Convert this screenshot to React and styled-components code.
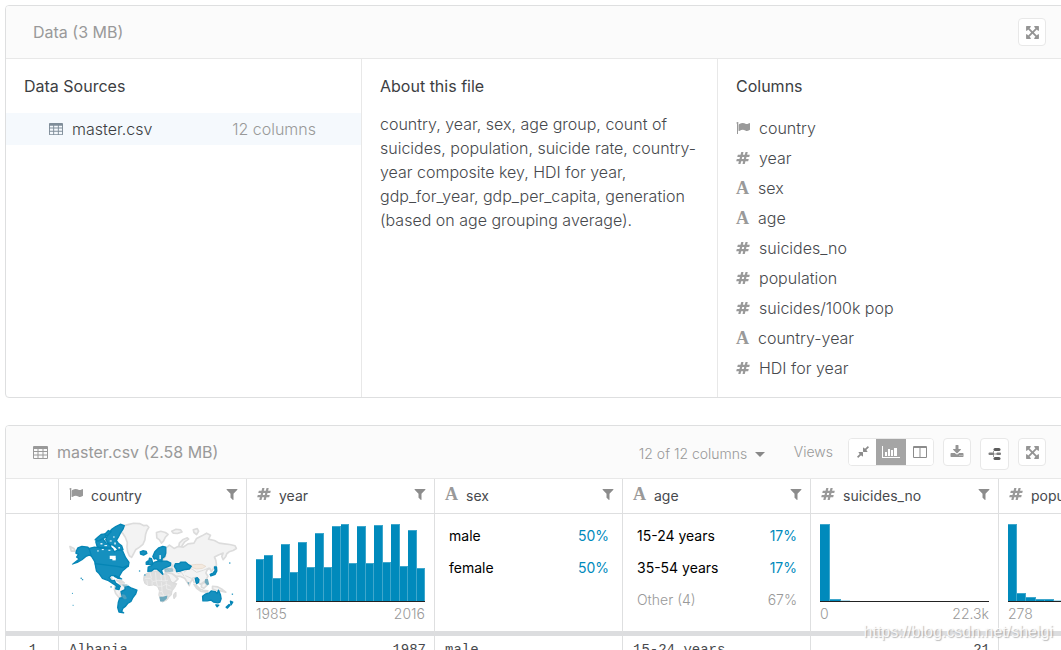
import React from "react";
import styled, { createGlobalStyle, css } from "styled-components";

const GlobalStyle = createGlobalStyle`
  *, *::before, *::after { box-sizing: border-box; }
  html, body { margin: 0; background: #fff; }
  body {
    font-family: Inter, "Liberation Sans", sans-serif;
    font-size: 16px;
    line-height: 24px;
    font-weight: 300;
    color: #47494d;
  }
  button, select { font: inherit; color: inherit; }
  h2, h3, p, ul { margin: 0; padding: 0; font-size: inherit; }
`;

/* ---------- icons ---------- */

const Glyph = styled.svg`
  display: block;
  flex: none;
  fill: currentColor;
  width: ${(p) => p.$size || 14}px;
  height: ${(p) => p.$size || 14}px;
`;

const PATHS = {
  filter:
    "M1595 295q17 41-14 70l-493 493v742q0 42-39 59-13 5-25 5-27 0-45-19l-256-256q-19-19-19-45v-486l-493-493q-31-29-14-70 17-39 59-39h1280q42 0 59 39z",
  expand:
    "M1411 541l-355 355 355 355 144-144q29-31 70-14 39 17 39 59v448q0 26-19 45t-45 19h-448q-42 0-59-40-17-39 14-69l144-144-355-355-355 355 144 144q31 30 14 69-17 40-59 40h-448q-26 0-45-19t-19-45v-448q0-42 40-59 39-17 69 14l144 144 355-355-355-355-144 144q-19 19-45 19-12 0-24-5-40-17-40-59v-448q0-26 19-45t45-19h448q42 0 59 40 17 39-14 69l-144 144 355 355 355-355-144-144q-31-30-14-69 17-40 59-40h448q26 0 45 19t19 45v448q0 42-39 59-13 5-25 5-26 0-45-19z",
  compress:
    "M896 960v448q0 26-19 45t-45 19-45-19l-144-144-332 332q-10 10-23 10t-23-10l-114-114q-10-10-10-23t10-23l332-332-144-144q-19-19-19-45t19-45 45-19h448q26 0 45 19t19 45zm755-672q0 13-10 23l-332 332 144 144q19 19 19 45t-19 45-45 19h-448q-26 0-45-19t-19-45v-448q0-26 19-45t45-19 45 19l144 144 332-332q10-10 23-10t23 10l114 114q10 10 10 23z",
  number:
    "M991 1024l64-256h-254l-64 256h254zm768-504l-56 224q-7 24-31 24h-327l-64 256h311q15 0 25 12 10 14 6 28l-56 224q-5 24-31 24h-327l-81 328q-7 24-31 24h-224q-16 0-26-12-9-12-6-28l78-312h-254l-81 328q-7 24-31 24h-225q-15 0-25-12-9-12-6-28l78-312h-311q-15 0-25-12-9-12-6-28l56-224q7-24 31-24h327l64-256h-311q-15 0-25-12-10-14-6-28l56-224q5-24 31-24h327l81-328q7-24 32-24h224q15 0 25 12 9 12 6 28l-78 312h254l81-328q7-24 32-24h224q15 0 25 12 9 12 6 28l-78 312h311q15 0 25 12 9 12 6 28z",
  download:
    "M1344 1344q0-26-19-45t-45-19-45 19-19 45 19 45 45 19 45-19 19-45zm256 0q0-26-19-45t-45-19-45 19-19 45 19 45 45 19 45-19 19-45zm128-224v320q0 40-28 68t-68 28h-1472q-40 0-68-28t-28-68v-320q0-40 28-68t68-28h465l135 136q58 56 136 56t136-56l136-136h464q40 0 68 28t28 68zm-325-569q17 41-14 70l-448 448q-18 19-45 19t-45-19l-448-448q-31-29-14-70 17-39 59-39h256v-448q0-26 19-45t45-19h256q26 0 45 19t19 45v448h256q42 0 59 39z",
  flag:
    "M320 256q0 72-64 110v1266q0 13-9.5 22.5t-22.5 9.5h-64q-13 0-22.5-9.5t-9.5-22.5v-1266q-64-38-64-110 0-53 37.5-90.5t90.5-37.5 90.5 37.5 37.5 90.5zm1472 64v763q0 25-12.5 38.5t-39.5 27.5q-215 116-369 116-61 0-123.5-22t-108.5-48-115.5-48-142.5-22q-192 0-464 146-17 9-33 9-26 0-45-19t-19-45v-742q0-32 31-55 21-14 79-43 236-120 421-120 107 0 200 29t219 88q38 19 88 19 54 0 117.5-21t110-47 88-47 54.5-21q26 0 45 19t19 45z",
};

const Icon = ({ name, size }) => (
  <Glyph viewBox="0 0 1792 1792" $size={size} aria-hidden="true">
    <path d={PATHS[name]} />
  </Glyph>
);

const TableIcon = ({ size = 14 }) => (
  <Glyph viewBox="0 0 15 15" $size={size} aria-hidden="true">
    <path
      fillRule="evenodd"
      d="M1 1h13q1 0 1 1v11q0 1-1 1H1q-1 0-1-1V2q0-1 1-1zM1 4v2h3.500V4zM5.500 4v2h4V4zM10.500 4v2H14V4zM1 7v2.500h3.500V7zM5.500 7v2.500h4V7zM10.500 7v2.500H14V7zM1 10.500V13h3.500v-2.500zM5.500 10.500V13h4v-2.500zM10.500 10.500V13H14v-2.500z"
    />
  </Glyph>
);

const ChartIcon = () => (
  <Glyph viewBox="0 0 18 14" $size={18} aria-hidden="true">
    <path d="M0 1h1v11h17v1H0zM3 7h2v4H3zM6 4h2v7H6zM9 5h2v6H9zM12 3h3v8h-3z" />
  </Glyph>
);

const ColumnsIcon = () => (
  <Glyph viewBox="0 0 14 14" aria-hidden="true">
    <path
      fillRule="evenodd"
      d="M1 1h12q1 0 1 1v10q0 1-1 1H1q-1 0-1-1V2q0-1 1-1zM1 3v9h5.500V3zM7.500 3v9H13V3z"
    />
  </Glyph>
);

const KernelIcon = () => (
  <Glyph viewBox="0 0 14 14" aria-hidden="true">
    <path
      d="M5.500 4V10M5.500 7H9"
      fill="none"
      stroke="currentColor"
      strokeWidth="1"
      opacity="0.6"
    />
    <rect x="0.500" y="5.500" width="5" height="2.500" rx="1" opacity="0.8" />
    <rect x="5.500" y="1" width="7" height="3" rx="1.500" />
    <rect x="8.500" y="5.500" width="4.500" height="2.500" rx="1" opacity="0.8" />
    <rect x="5.500" y="10" width="7" height="3" rx="1.500" />
  </Glyph>
);

const CaretIcon = styled.span`
  border: 5px solid transparent;
  border-top-color: #888;
  border-bottom: 0;
`;

const Letter = styled.span`
  width: 13px;
  flex: none;
  font: bold 18px/20px "Liberation Serif", serif;
`;

const TypeMark = styled.span`
  display: flex;
  flex: none;
  color: #999;
`;

const TypeIcon = ({ type }) => (
  <TypeMark>
    {type === "text" ? <Letter aria-hidden="true">A</Letter> : <Icon name={type} />}
  </TypeMark>
);

/* ---------- page and panels ---------- */

const Page = styled.main`
  position: relative;
  height: 100vh;
  overflow: hidden;
  padding: 5px 0 0 5px;
`;

/* The panels run past the right edge of the window. */
const Panels = styled.div`
  display: flex;
  flex-direction: column;
  gap: 27px;
  margin-right: -14px;
`;

const Panel = styled.section`
  border: 1px solid #dedfe0;
  border-radius: 4px;
  overflow: hidden;
`;

const PanelHeader = styled.header`
  display: flex;
  align-items: center;
  height: 53px;
  padding: 0 28px 0 27px;
  background: #fbfbfb;
  border-bottom: 1px solid #e8e8e8;
  color: #999;
`;

const PanelTitle = styled.h2`
  display: flex;
  align-items: center;
  gap: 9px;
  margin-right: auto;
  font-weight: 400;
`;

const buttonFrame = css`
  display: flex;
  align-items: center;
  justify-content: center;
  padding: 0;
  background: #fff;
  color: #949494;
  border: 1px solid #e8e8e8;
  border-radius: 4px;
`;

const IconButton = styled.button`
  ${buttonFrame}
  width: ${(p) => (p.$tall ? 29 : 28)}px;
  height: ${(p) => (p.$tall ? 32 : 28)}px;
  margin-left: 9px;
  ${(p) => p.$tall && "color: #5c5c5c; margin-top: 4px;"}
`;

/* ---------- overview panel ---------- */

const Overview = styled.div`
  display: grid;
  grid-template-columns: repeat(3, 1fr);
`;

const OverviewColumn = styled.div`
  padding: 15px 0 14px;
  border-right: 1px solid #e8e8e8;
  &:last-child { border-right: 0; }
`;

const Heading = styled.h3`
  padding: 0 18px;
  font-weight: 400;
  color: #3c3e42;
`;

const About = styled.p`
  padding: 14px 18px 0;
`;

const FileRow = styled.a`
  display: flex;
  align-items: center;
  gap: 9px;
  height: 32px;
  margin-top: 15px;
  padding: 0 45px 0 43px;
  background: #f5f9fd;
  color: #3c3e42;
  text-decoration: none;
  svg { color: #7f8d99; }
`;

const FileMeta = styled.span`
  margin-left: auto;
  color: #999;
`;

const FieldList = styled.ul`
  padding: 15px 18px 0;
  list-style: none;
`;

const Field = styled.li`
  display: flex;
  align-items: center;
  gap: 9px;
  height: 30px;
`;

/* ---------- file panel ---------- */

const ColumnPicker = styled.label`
  display: inline-grid;
  align-items: center;
  margin: 4px 29px 0 0;
  font-size: 14px;
  select {
    grid-area: 1 / 1;
    appearance: none;
    padding: 0 17px 0 0;
    border: 0;
    background: none;
  }
  ${CaretIcon} {
    grid-area: 1 / 1;
    justify-self: end;
    pointer-events: none;
  }
`;

const ViewsLabel = styled.span`
  margin-right: 15px;
  font-size: 14px;
`;

const ViewGroup = styled.div`
  display: flex;
  height: 28px;
  background: #fff;
  border: 1px solid #e8e8e8;
  border-radius: 4px;
  overflow: hidden;
`;

const ViewButton = styled.button`
  display: flex;
  align-items: center;
  justify-content: center;
  width: ${(p) => (p.$active ? 30 : 27)}px;
  padding: 0;
  border: 0;
  background: ${(p) => (p.$active ? "#a5a5a5" : "#fff")};
  color: ${(p) => (p.$active ? "#fff" : "#8c8c8c")};
`;

const DataTable = styled.table`
  width: 1181px;
  table-layout: fixed;
  border-collapse: separate;
  border-spacing: 0;
  th, td {
    padding: 0;
    border-right: 1px solid #dedfe0;
    vertical-align: top;
    text-align: left;
  }
`;

const Col = styled.col`
  width: ${(p) => (p.$index ? 53 : 188)}px;
`;

const HeadCell = styled.th`
  height: 35px;
  border-bottom: 1px solid #dedfe0;
  font-size: 14px;
  font-weight: 400;
`;

const HeadInner = styled.div`
  display: flex;
  align-items: center;
  gap: 8px;
  height: 34px;
  padding: 0 7px 0 10px;
`;

const HeadIcon = styled.span`
  padding-bottom: 4px;
`;

const FilterButton = styled.button`
  margin-left: auto;
  padding: 0 0 4px;
  border: 0;
  background: none;
  color: #8c8c8c;
`;

const StatCell = styled.td`
  height: 122px;
  border-bottom: 5px solid #dcdddf;
  font-size: 14px;
`;

const Chart = styled.div`
  padding: 10px 9px 0;
`;

const Bars = styled.div`
  display: flex;
  align-items: flex-end;
  height: 78px;
  border-bottom: 1px solid #222;
`;

const Bar = styled.span`
  flex: 1;
  background: #008abc;
  border: 0 solid #3fa7cc;
  border-width: ${(p) => (p.$faint ? 0 : "1px 1px 0 0")};
  opacity: ${(p) => (p.$faint ? 0.3 : 1)};
`;

const Range = styled.div`
  display: flex;
  justify-content: space-between;
  color: #999;
`;

const Values = styled.ul`
  padding: 6px 13px 0 14px;
  list-style: none;
`;

const Value = styled.li`
  display: flex;
  align-items: center;
  justify-content: space-between;
  height: 32px;
  font-weight: ${(p) => (p.$other ? 300 : 400)};
  color: ${(p) => (p.$other ? "#999" : "#000")};
  span:last-child { color: ${(p) => (p.$other ? "#999" : "#008abc")}; }
`;

const DataCell = styled.td`
  && {
    padding: 0 8px 0 10px;
    text-align: ${(p) => p.$align || "left"};
    font: 400 14px/28px "Liberation Mono", monospace;
    color: #47494d;
  }
`;

const Watermark = styled.span`
  position: absolute;
  right: 8px;
  bottom: 8px;
  font: 400 16px/20px "Liberation Sans", sans-serif;
  color: rgba(255, 255, 255, 0.85);
  text-shadow: 1px 1px 1px rgba(120, 120, 120, 0.5);
`;

/* ---------- world map ---------- */

const MapSvg = styled.svg`
  display: block;
  width: 187px;
  height: 110px;
  margin: 1px 0 0 1px;
  max-width: calc(100% - 1px);
`;

const EMPTY_LAND = [
  // Greenland
  "M183 40L192 32 205 28 222 24 240 25 252 31 262 30 268 36 262 46 258 58 256 74 250 88 240 96 228 104 222 116 216 127 209 122 204 110 202 96 203 82 197 66 189 54 181 50z",
  // Svalbard and the Arctic islands
  "M291 52L304 48 318 52 326 58 318 66 312 78 306 84 300 74 292 68z",
  "M337 48L350 42 364 44 368 50 354 55 342 54z",
  "M358 96L360 84 370 74 384 68 388 72 376 80 368 92 364 100z",
  "M402 44L414 40 418 48 412 58 404 52z",
  // Russia and Asia
  "M320 98L330 90 344 100 356 94 372 96 386 86 404 84 412 70 428 62 442 54 454 60 448 72 466 76 480 84 496 86 512 88 528 92 532 100 522 106 510 110 503 116 500 124 492 134 488 124 492 114 478 120 466 126 470 136 472 150 462 162 456 170 452 160 444 164 440 174 446 184 440 196 430 204 424 208 414 202 404 202 400 192 392 204 390 212 384 202 376 190 362 184 350 184 340 178 320 176 316 168 322 160 336 160 340 150 330 150 318 146 310 136 318 124z",
  "M318 172L338 176 348 184 356 192 346 202 332 208 326 196z",
  // Indonesia and Papua
  "M404 208L412 212 422 222 432 226 446 228 444 232 426 230 412 220z",
  "M428 206L440 202 442 212 434 220 426 216z",
  "M460 214L476 216 490 224 500 232 484 228 470 226 460 222z",
  // Central and South America
  "M146 184L156 190 160 200 152 198z",
  "M168 208L184 208 196 214 206 222 196 226 182 236 184 250 178 248 168 236 164 224z",
  "M186 254L196 258 194 268 186 262z",
  "M170 196L186 198 194 204 184 204z",
  "M30 94L42 100 46 108 34 108z",
];

const AFRICA = [
  "M254 180L268 172 284 168 298 168 304 176 316 176 328 182 334 198 342 206 352 206 346 218 338 228 336 240 328 248 322 256 308 262 302 252 298 240 300 228 294 214 282 210 268 212 256 206 252 194z",
  "M344 236L350 232 350 244 344 252 342 244z",
];

const BORDERS = [
  "M322 160L330 170 344 164 356 176 366 172 374 184M344 164L346 152M374 172L388 160 398 162 412 172 432 166 450 158M388 160L394 148M378 182L396 190 412 186 422 196",
];

const AFRICA_BORDERS =
  "M256 190L272 190 280 200 296 196 314 198 326 196M272 174L276 190M288 172L290 196M304 178L306 198M316 180L318 198M262 196L264 210M278 200L278 210M290 198L294 214 308 214 320 208 334 214M306 202L308 230 300 230M320 200L322 222 336 226M308 230L314 244 330 240M300 240L314 244 312 256";

const BLUE_LAND = [
  // Alaska
  "M50 106L54 98 66 94 84 96 88 102 104 100 108 120 98 124 88 120 78 124 66 134 52 142 40 146 58 132 50 126 56 118 48 114z",
  // Canada
  "M88 100L104 96 122 98 136 100 148 94 158 100 164 110 172 106 180 98 190 110 198 128 208 142 206 154 192 160 180 156 172 160 108 152 104 138 94 122z",
  // Arctic archipelago
  "M142 62L156 42 168 34 182 27 194 31 190 42 182 54 176 66 170 76 176 84 186 92 190 104 176 106 168 96 160 90 148 88 138 74z",
  "M108 80L118 72 130 72 138 82 152 90 154 100 136 98 122 98 112 94z",
  "M106 74L114 66 124 58 136 56 138 66 126 72 116 78z",
  "M136 56L146 46 154 50 142 62z",
  // United States and Mexico
  "M106 146L172 154 190 158 204 152 198 160 188 168 182 178 176 190 168 182 154 182 148 188 156 198 164 196 168 204 182 214 178 218 160 206 144 196 128 190 118 176 110 168 108 158z",
  // Caribbean
  "M164 184L176 186 186 192 176 190z",
  // Brazil and the south
  "M196 216L206 214 216 220 232 226 228 238 220 248 214 260 204 266 198 274 190 280 186 290 192 294 178 292 174 278 176 262 180 250 188 248 186 238 184 230 196 224z",
  "M170 214L180 218 178 224 168 222z",
  // Iceland and British Isles
  "M242 110L250 107 260 109 262 115 252 120 243 117z",
  "M267 140L270 129 276 131 280 145 274 149 266 148z",
  "M260 142L265 138 265 148 260 148z",
  // Scandinavia
  "M280 124L286 110 298 98 310 94 319 96 319 114 316 124 308 130 308 136 298 138 290 130 284 132z",
  // Europe
  "M266 156L276 152 284 142 296 138 306 140 312 138 322 138 334 144 333 152 322 156 314 160 306 166 310 178 302 170 292 162 284 162 276 168 265 169z",
  // Kazakhstan
  "M345 154L348 146 360 146 364 141 378 141 386 148 396 154 390 162 376 164 364 168 352 170 350 162z",
  // Thailand, Japan
  "M408 190L414 188 419 194 418 202 412 206 410 200z",
  "M453 178L462 174 468 166 466 156 472 156 473 168 468 178 455 183z",
  // Australia
  "M430 244L438 238 450 234 456 228 468 230 474 236 478 226 484 240 486 252 482 262 476 264 464 262 456 256 444 258 431 258z",
  "M470 270L479 271 474 276z",
  // New Zealand
  "M514 259L521 262 516 270z",
  "M510 269L513 271 505 280 501 277z",
];

const DOTS = [
  [62, 188, 4], [66, 192, 4], [36, 146, 3], [238, 166, 4], [152, 214, 4], [254, 178, 4],
  [510, 142, 4], [38, 270, 3], [518, 236, 4], [36, 234, 3],
];

const LAKES = [
  [150, 122, 18, 10], [158, 130, 10, 6], [122, 84, 6, 4], [134, 90, 8, 3], [150, 76, 6, 3],
  [164, 82, 4, 6], [112, 106, 5, 3], [126, 102, 6, 3], [146, 104, 6, 3], [160, 64, 5, 3],
  [176, 96, 5, 4], [300, 120, 4, 12],
];

const WorldMap = () => (
  <MapSvg viewBox="0 0 561 330" role="img" aria-label="Countries in the data">
    <g fill="#f3f3f3" stroke="#dcdcdc" strokeWidth="5" strokeLinejoin="round">
      {EMPTY_LAND.map((d) => <path key={d} d={d} />)}
    </g>
    <g fill="#dedede" stroke="#d9d9d9" strokeWidth="3">
      {AFRICA.map((d) => <path key={d} d={d} />)}
    </g>
    <path d={AFRICA_BORDERS} fill="none" stroke="#f1f1f1" strokeWidth="2" />
    <g fill="none" stroke="#dcdcdc" strokeWidth="3">
      {BORDERS.map((d) => <path key={d} d={d} />)}
    </g>
    <path d="M396 150L412 148 428 148 440 154 430 160 412 162 400 158z" fill="#f3e9df" stroke="#e4d5c6" strokeWidth="2" />
    <g fill="#1590bf" stroke="#0585b5" strokeWidth="4" strokeLinejoin="round">
      {BLUE_LAND.map((d) => <path key={d} d={d} />)}
    </g>
    <g fill="#6fa9bd">
      <path d="M300 246L310 246 324 242 322 252 312 260 302 260z" />
      <path d="M438 192L446 192 450 208 444 212 436 202z" />
      <path d="M312 160L340 160 342 170 318 172z" opacity="0.6" />
      <path d="M188 208L204 208 200 218 190 214z" opacity="0.6" />
      <path d="M384 202L390 202 388 210z" />
      <path d="M186 238L196 240 202 250 196 254 188 248z" opacity="0.6" />
    </g>
    <g fill="#fff">
      {LAKES.map(([x, y, w, h]) => <rect key={`${x}-${y}`} x={x} y={y} width={w} height={h} />)}
    </g>
    <g fill="#2b99c2">
      {DOTS.map(([x, y, s]) => <rect key={`${x}-${y}`} x={x} y={y} width={s} height={s} />)}
    </g>
  </MapSvg>
);

/* ---------- data ---------- */

const FIELDS = [
  ["flag", "country"],
  ["number", "year"],
  ["text", "sex"],
  ["text", "age"],
  ["number", "suicides_no"],
  ["number", "population"],
  ["number", "suicides/100k pop"],
  ["text", "country-year"],
  ["number", "HDI for year"],
];

const YEARS = [42, 46, 23, 57, 29, 59, 34, 68, 34, 75, 77, 38, 75, 38, 76, 39, 77, 35, 71, 33];
const rest = (head, n = 20) => [...head, ...Array(n - head.length).fill(0)];

const Histogram = ({ bars, from, to }) => (
  <Chart>
    <Bars>
      {bars.map((h, i) => <Bar key={i} $faint={h < 2} style={{ height: h }} />)}
    </Bars>
    <Range><span>{from}</span><span>{to}</span></Range>
  </Chart>
);

const Distribution = ({ items }) => (
  <Values>
    {items.map(([label, share, other]) => (
      <Value key={label} $other={other}><span>{label}</span><span>{share}</span></Value>
    ))}
  </Values>
);

const COLUMNS = [
  { type: "flag", name: "country", stat: <WorldMap />, value: "Albania" },
  { type: "number", name: "year", stat: <Histogram bars={YEARS} from="1985" to="2016" />, value: "1987", align: "right" },
  { type: "text", name: "sex", stat: <Distribution items={[["male", "50%"], ["female", "50%"]]} />, value: "male" },
  {
    type: "text",
    name: "age",
    stat: <Distribution items={[["15-24 years", "17%"], ["35-54 years", "17%"], ["Other (4)", "67%", true]]} />,
    value: "15-24 years",
  },
  { type: "number", name: "suicides_no", stat: <Histogram bars={rest([77, 2, 1], 18)} from="0" to="22.3k" />, value: "21", align: "right" },
  { type: "number", name: "population", stat: <Histogram bars={rest([77, 8, 4, 2, 2, 1])} from="278" to="43.8m" />, value: "312900", align: "right" },
];

export default function App() {
  return (
    <>
      <GlobalStyle />
      <Page>
        <Panels>
          <Panel>
            <PanelHeader>
              <PanelTitle>Data (3 MB)</PanelTitle>
              <IconButton aria-label="Expand"><Icon name="expand" size={15} /></IconButton>
            </PanelHeader>
            <Overview>
              <OverviewColumn>
                <Heading>Data Sources</Heading>
                <FileRow href="#master">
                  <TableIcon />
                  master.csv
                  <FileMeta>12 columns</FileMeta>
                </FileRow>
              </OverviewColumn>
              <OverviewColumn>
                <Heading>About this file</Heading>
                <About>
                  country, year, sex, age group, count of suicides, population, suicide rate,
                  country-year composite key, HDI for year, gdp_for_year, gdp_per_capita,
                  generation (based on age grouping average).
                </About>
              </OverviewColumn>
              <OverviewColumn>
                <Heading>Columns</Heading>
                <FieldList>
                  {FIELDS.map(([type, name]) => (
                    <Field key={name}><TypeIcon type={type} />{name}</Field>
                  ))}
                </FieldList>
              </OverviewColumn>
            </Overview>
          </Panel>

          <Panel id="master">
            <PanelHeader>
              <PanelTitle><TableIcon size={15} />master.csv (2.58 MB)</PanelTitle>
              <ColumnPicker>
                <select aria-label="Columns shown"><option>12 of 12 columns</option></select>
                <CaretIcon />
              </ColumnPicker>
              <ViewsLabel>Views</ViewsLabel>
              <ViewGroup>
                <ViewButton aria-label="Compact"><Icon name="compress" /></ViewButton>
                <ViewButton $active aria-label="Detail"><ChartIcon /></ViewButton>
                <ViewButton aria-label="Column"><ColumnsIcon /></ViewButton>
              </ViewGroup>
              <IconButton aria-label="Download"><Icon name="download" /></IconButton>
              <IconButton $tall aria-label="New kernel"><KernelIcon /></IconButton>
              <IconButton aria-label="Expand"><Icon name="expand" size={15} /></IconButton>
            </PanelHeader>
            <DataTable>
              <colgroup>
                <Col $index />
                {COLUMNS.map((c) => <Col key={c.name} />)}
              </colgroup>
              <thead>
                <tr>
                  <HeadCell />
                  {COLUMNS.map((c) => (
                    <HeadCell key={c.name} scope="col">
                      <HeadInner>
                        <HeadIcon><TypeIcon type={c.type} /></HeadIcon>
                        {c.name}
                        <FilterButton aria-label={`Filter ${c.name}`}><Icon name="filter" /></FilterButton>
                      </HeadInner>
                    </HeadCell>
                  ))}
                </tr>
              </thead>
              <tbody>
                <tr>
                  <StatCell />
                  {COLUMNS.map((c) => <StatCell key={c.name}>{c.stat}</StatCell>)}
                </tr>
                <tr>
                  <DataCell $align="center">1</DataCell>
                  {COLUMNS.map((c) => <DataCell key={c.name} $align={c.align}>{c.value}</DataCell>)}
                </tr>
              </tbody>
            </DataTable>
          </Panel>
        </Panels>
        <Watermark>https://blog.csdn.net/shelgi</Watermark>
      </Page>
    </>
  );
}
